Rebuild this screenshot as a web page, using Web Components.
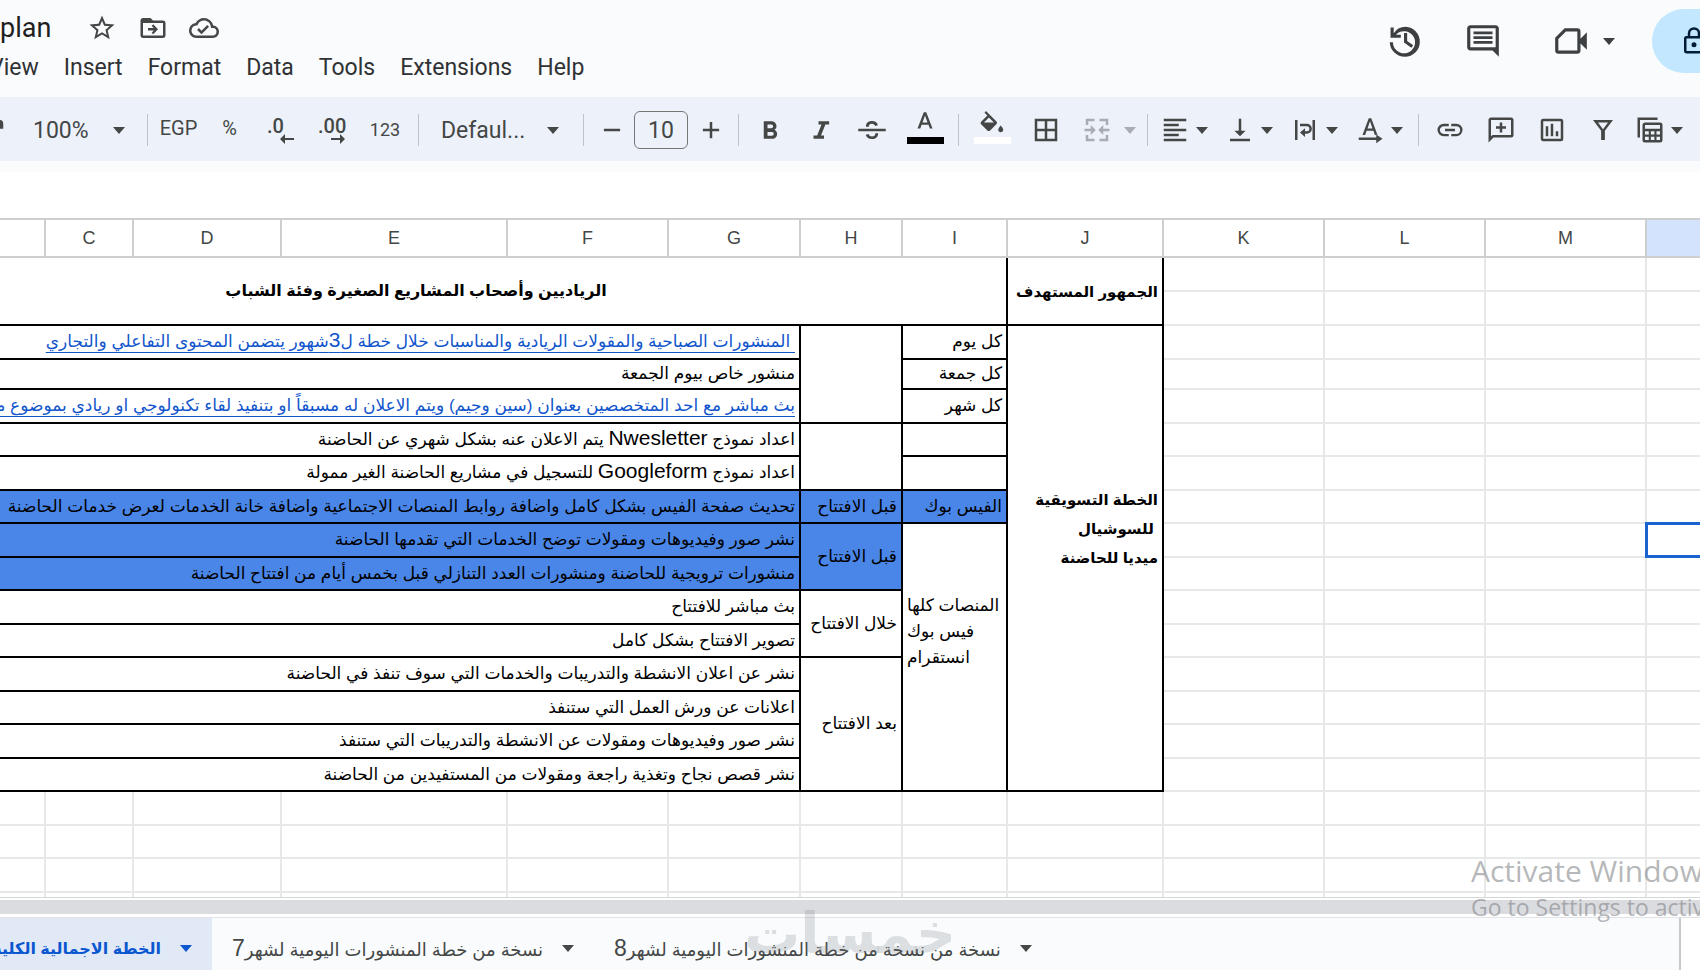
<!DOCTYPE html>
<html lang="en">
<head>
<meta charset="utf-8">
<title>plan</title>
<style>
  body {
    margin: 0;
    height: 100vh;
    overflow: hidden;
    font-family: Roboto, "DejaVu Sans", sans-serif;
    color: #444746;
    background: #fff;
  }
  sheet-app {
    height: 100%;
  }
</style>
</head>
<body>
<sheet-app>
  <doc-header slot="header" name="plan"></doc-header>
  <tool-bar slot="toolbar"></tool-bar>
  <sheet-grid></sheet-grid>
  <sheet-tabs slot="tabs"></sheet-tabs>
  <site-watermark slot="overlay">خمسات</site-watermark>
  <activation-notice slot="overlay">
    <span slot="title">Activate Windows</span>
    <span>Go to Settings to activate Windows.</span>
  </activation-notice>
</sheet-app>

<script>
const ICONS = {
  star: '<path d="M22 9.24l-7.19-.62L12 2 9.19 8.63 2 9.24l5.46 4.73L5.82 21 12 17.27 18.18 21l-1.63-7.03L22 9.24zM12 15.4l-3.76 2.27 1-4.28-3.32-2.88 4.38-.38L12 6.1l1.71 4.04 4.38.38-3.32 2.88 1 4.28L12 15.4z"/>',
  move: '<path d="M20 6h-8l-2-2H4c-1.1 0-2 .9-2 2v12c0 1.1.9 2 2 2h16c1.1 0 2-.9 2-2V8c0-1.1-.9-2-2-2zm0 12H4V8h16v10zm-7.8-1l3.8-4-3.8-4-1.3 1.3L12.600 12H8v2h4.600l-1.7 1.700z"/>',
  cloud: '<path d="M19.35 10.04A7.49 7.49 0 0 0 12 4C9.110 4 6.600 5.640 5.350 8.040A5.994 5.994 0 0 0 0 14c0 3.310 2.690 6 6 6h13c2.760 0 5-2.240 5-5 0-2.640-2.050-4.780-4.650-4.960zM19 18H6c-2.210 0-4-1.790-4-4 0-2.050 1.530-3.760 3.560-3.970l1.070-.11.5-.95A5.469 5.469 0 0 1 12 6c2.620 0 4.880 1.860 5.390 4.430l.3 1.500 1.530.11A2.980 2.980 0 0 1 22 15c0 1.650-1.350 3-3 3zm-9-3.820l-2.090-2.090L6.500 13.500 10 17l6.010-6.010-1.410-1.410z"/>',
  history: '<path d="M13 3a9 9 0 0 0-7.500 4.050V3.500h-2V10H10V8H6.900A7 7 0 1 1 5 12.800H3A9.500 9.500 0 1 0 13 3zm-1 4v6l4.700 3.300 1.100-1.600L14 12V7z"/>',
  comment: '<path d="M22 4c0-1.100-.9-2-2-2H4c-1.100 0-2 .9-2 2v12c0 1.100.9 2 2 2h14l4 4V4zM20 16H4V4h16v12zM6 12h12v1.800H6zm0-3h12v1.800H6zm0-3h12v1.800H6z"/>',
  meet: '<path d="M8 4h8a2 2 0 0 1 2 2v4.500L22 6.500v11l-4-4V18a2 2 0 0 1-2 2H4a2 2 0 0 1-2-2v-8zM8.800 6L4 10.800V18h12V6z" fill-rule="evenodd"/>',
  lock: '<path d="M18 8h-1V6A5 5 0 0 0 7 6v2H6a2 2 0 0 0-2 2v10c0 1.100.9 2 2 2h12a2 2 0 0 0 2-2V10a2 2 0 0 0-2-2zM9 6a3 3 0 0 1 6 0v2H9zm9 14H6V10h12zm-6-3a2 2 0 1 0 0-4 2 2 0 0 0 0 4z"/>',
  paint: '<path d="M4 4h14a3 3 0 0 1 3 3v4h-9v10H9V9h9V7H4z"/>',
  minus: '<path d="M5.500 11h13v2h-13z"/>',
  plus: '<path d="M18.500 13H13v5.500h-2V13H5.500v-2H11V5.500h2V11h5.500z"/>',
  bold: '<path d="M15.600 11.800c1-.7 1.600-1.800 1.600-2.800 0-2.300-1.700-4-4-4H7v14h7c2.100 0 3.700-1.700 3.700-3.800 0-1.500-.8-2.800-2.100-3.400zM10 7.500h3a1.500 1.500 0 0 1 0 3h-3zm3.500 9H10v-3h3.500a1.500 1.500 0 0 1 0 3z"/>',
  italic: '<path d="M10 5v2.600h2.400l-3.500 8.800H6V19h8.400v-2.600H12l3.500-8.800H18.500V5z"/>',
  strike: '<path d="M1 11h22v2H1zM7.200 9.300C7 6.500 9 4.800 12 4.800c2.500 0 4.200 1.200 4.700 3.300l-2.200.7c-.3-1.200-1.200-1.900-2.500-1.900-1.700 0-2.600.8-2.600 2.400zM16.900 14.500c0 3-1.900 4.700-4.900 4.700-2.600 0-4.500-1.300-5-3.500l2.200-.6c.4 1.300 1.400 2 2.800 2 1.700 0 2.700-.8 2.700-2.600z"/>',
  textColor: '<path d="M11 1L6 14h2.200l1.100-3.100h5.500l1.100 3.100H18L13 1zM10 9.100l2-5.600 2 5.600z"/>',
  fill: '<path d="M15.600 8.400L7.200 0 6 1.300l2.300 2.300-5 5c-.5.500-.5 1.400 0 2l5 5c.3.300.7.400 1.100.4s.8-.1 1.100-.4l5.100-5.200c.5-.5.5-1.400 0-2zM5.500 9.200L9.500 5.200l4 4zM19 11.500s-2 2.100-2 3.500c0 1.100.9 2 2 2s2-.9 2-2c0-1.400-2-3.500-2-3.500z"/>',
  borders: '<path d="M3 3v18h18V3zm8 16H5v-6h6zm0-8H5V5h6zm8 8h-6v-6h6zm0-8h-6V5h6z"/>',
  merge: '<path d="M3 3h7v2H5v3H3zm11 0h7v5h-2V5h-5zM3 16h2v3h5v2H3zm16 0h2v5h-7v-2h5zM2 11h5V8l4 4-4 4v-3H2zm20 0h-5V8l-4 4 4 4v-3h5z"/>',
  align: '<path d="M3 3h18v2H3zm0 4h12v2H3zm0 4h18v2H3zm0 4h12v2H3zm0 4h18v2H3z"/>',
  valign: '<path d="M16.500 12.500h-3.500V3h-2v9.500H7.500L12 17zM4 19v2h16v-2z"/>',
  wrap: '<path d="M4 4h2v16H4zm14 0h2v16h-2zM8 7h5.500a3.800 3.800 0 0 1 0 8H12v2.500L8 14l4-3.500V13h1.500a1.900 1.900 0 0 0 0-4H8z"/>',
  rotate: '<path d="M11 2.500L6 16h2.100l1.200-3.400h5.400l1.200 3.400H18L13 2.500zM10 10.700l2-5.700 2 5.700zM3 18h14v-2.500l5 3.500-5 3.500V20H3z"/>',
  link: '<path d="M3.900 12c0-1.710 1.390-3.100 3.100-3.100h4V7H7a5 5 0 0 0 0 10h4v-1.900H7c-1.710 0-3.100-1.390-3.100-3.100zM8 13h8v-2H8zm9-6h-4v1.900h4a3.100 3.100 0 0 1 0 6.200h-4V17h4a5 5 0 0 0 0-10z"/>',
  addComment: '<path d="M4 2h16a2 2 0 0 1 2 2v12a2 2 0 0 1-2 2H6l-4 4V4c0-1.100.9-2 2-2zm0 2v13l1.200-1H20V4zm7 2h2v3h3v2h-3v3h-2v-3H8V9h3z" fill-rule="evenodd"/>',
  chart: '<path d="M19 3H5a2 2 0 0 0-2 2v14c0 1.100.9 2 2 2h14a2 2 0 0 0 2-2V5a2 2 0 0 0-2-2zm0 16H5V5h14zM7 9h2v8H7zm4-2h2v10h-2zm4 6h2v4h-2z"/>',
  filter: '<path d="M4 4h16l-6.500 8.500V20h-3v-7.500zM8 6l4 5.300L16 6z" fill-rule="evenodd"/>',
  views: '<path d="M2 2h16v2H4v14H2zM8 6h12a2 2 0 0 1 2 2v12a2 2 0 0 1-2 2H8a2 2 0 0 1-2-2V8c0-1.100.9-2 2-2zm0 2v3h12V8zm0 5v2.500h3V13zm4.700 0v2.500h2.800V13zm4.500 0v2.500H20V13zM8 17.300V20h3v-2.700zm4.700 0V20h2.800v-2.700zm4.500 0V20H20v-2.700z" fill-rule="evenodd"/>',
};

class SheetIcon extends HTMLElement {
  constructor() {
    super();
    this.attachShadow({ mode: "open" });
  }

  connectedCallback() {
    this.shadowRoot.innerHTML = `
      <style>
        :host { display: block; flex: none; width: var(--icon, 30px); height: var(--icon, 30px); }
        svg { display: block; width: 100%; height: 100%; fill: currentColor; }
      </style>
      <svg viewBox="0 0 24 24" aria-hidden="true">${ICONS[this.getAttribute("name")]}</svg>
    `;
  }
}
customElements.define("sheet-icon", SheetIcon);

class DropCaret extends HTMLElement {
  constructor() {
    super();
    this.attachShadow({ mode: "open" }).innerHTML = `
      <style>
        :host { display: block; flex: none; width: 12px; height: 7px; }
        svg { display: block; fill: currentColor; }
      </style>
      <svg width="12" height="7" viewBox="0 0 12 7" aria-hidden="true"><path d="M0 0h12L6 7z"/></svg>
    `;
  }
}
customElements.define("drop-caret", DropCaret);

class SheetApp extends HTMLElement {
  constructor() {
    super();
    this.attachShadow({ mode: "open" }).innerHTML = `
      <style>
        :host { display: flex; flex-direction: column; position: relative; overflow: hidden; }
        main { flex: 1; min-height: 0; display: flex; flex-direction: column; }
      </style>
      <slot name="header"></slot>
      <slot name="toolbar"></slot>
      <main><slot></slot></main>
      <slot name="tabs"></slot>
      <slot name="overlay"></slot>
    `;
  }
}
customElements.define("sheet-app", SheetApp);

class DocHeader extends HTMLElement {
  constructor() {
    super();
    this.attachShadow({ mode: "open" });
  }

  connectedCallback() {
    const menus = ["View", "Insert", "Format", "Data", "Tools", "Extensions", "Help"];
    this.shadowRoot.innerHTML = `
      <style>
        :host {
          display: flex;
          justify-content: space-between;
          height: 97px;
          background: #f9fbfd;
          color: #1f1f1f;
        }
        button {
          display: flex;
          align-items: center;
          border: 0;
          padding: 0;
          background: none;
          font: inherit;
          color: inherit;
        }
        .title {
          display: flex;
          align-items: center;
          gap: 21px;
          height: 56px;
          --icon: 30px;
          color: #444746;
        }
        h1 {
          margin: 0 15px 0 0;
          font-size: 27px;
          line-height: 32px;
          font-weight: 400;
          color: #1f1f1f;
        }
        nav {
          display: flex;
          gap: 25px;
          margin-left: -11px;
          font-size: 23px;
          line-height: 24px;
          color: #303234;
        }
        .actions {
          display: flex;
          align-items: flex-start;
          flex: none;
          color: #3c4043;
          --icon: 38px;
        }
        .actions button { height: 64px; margin-top: 9px; }
        .history { width: 79px; }
        .comment { width: 88px; }
        .meet { gap: 13px; width: 100px; }
        .share {
          --icon: 30px;
          box-sizing: border-box;
          width: 48px;
          padding-left: 27px;
          border-radius: 32px 0 0 32px;
          background: #c2e7ff;
          color: #001d35;
          overflow: hidden;
        }
      </style>
      <div>
        <div class="title">
          <h1>${this.getAttribute("name")}</h1>
          <button aria-label="Star"><sheet-icon name="star"></sheet-icon></button>
          <button aria-label="Move"><sheet-icon name="move"></sheet-icon></button>
          <button aria-label="Saved to Drive"><sheet-icon name="cloud"></sheet-icon></button>
        </div>
        <nav>${menus.map((m) => `<button>${m}</button>`).join("")}</nav>
      </div>
      <div class="actions">
        <button class="history" aria-label="Version history"><sheet-icon name="history"></sheet-icon></button>
        <button class="comment" aria-label="Comments"><sheet-icon name="comment"></sheet-icon></button>
        <button class="meet" aria-label="Meet"><sheet-icon name="meet"></sheet-icon><drop-caret></drop-caret></button>
        <button class="share" aria-label="Share"><sheet-icon name="lock"></sheet-icon></button>
      </div>
    `;
  }
}
customElements.define("doc-header", DocHeader);

class ToolBar extends HTMLElement {
  constructor() {
    super();
    this.attachShadow({ mode: "open" });
  }

  button(name, label, cls = "") {
    return `<button class="${cls}" aria-label="${label}"><sheet-icon name="${name}"></sheet-icon></button>`;
  }

  menu(name, label, cls = "") {
    return `<button class="menu ${cls}" aria-label="${label}"><sheet-icon name="${name}"></sheet-icon><drop-caret></drop-caret></button>`;
  }

  connectedCallback() {
    this.shadowRoot.innerHTML = `
      <style>
        :host {
          display: flex;
          align-items: center;
          height: 62px;
          padding-top: 2px;
          overflow: hidden;
          background: #edf2fa;
          border-bottom: 11px solid #f9fbfd;
          font-size: 23px;
        }
        :host > * { flex: none; }
        button {
          display: flex;
          align-items: center;
          justify-content: center;
          width: 51px;
          height: 48px;
          padding: 0;
          border: 0;
          background: none;
          font: inherit;
          color: inherit;
        }
        hr { width: 1px; height: 32px; margin: 0 5px; border: 0; background: #c0c4c9; }
        .paint { width: 16px; padding-right: 9px; justify-content: flex-end; overflow: hidden; }
        .wide { width: 56px; }
        .step { width: 45px; }
        .format { padding-bottom: 4px; font-size: 20px; }
        .small { padding-bottom: 2px; font-size: 18px; }
        .menu { width: 65px; justify-content: flex-start; gap: 6px; padding-left: 7px; }
        .merge { width: 71px; gap: 12px; padding-left: 11px; color: #a9adb3; }
        .color { flex-direction: column; justify-content: flex-start; padding-top: 5px; }
        .color::after { content: ""; width: 37px; height: 7px; margin-top: -4px; background: var(--swatch); }
        .decimal {
          flex-direction: column;
          align-items: flex-start;
          padding-left: 12px;
          font-size: 20px;
          font-weight: 500;
          line-height: 20px;
        }
        .decimal svg { margin: -2px 0 0 13px; }
        label { display: flex; align-items: center; box-sizing: border-box; }
        .zoom { width: 126px; padding-left: 17px; }
        .zoom select { width: 80px; }
        .font { width: 154px; padding-left: 17px; }
        .font select { width: 106px; }
        select {
          appearance: none;
          border: 0;
          padding: 0;
          background: none;
          font: inherit;
          color: inherit;
        }
        input {
          box-sizing: border-box;
          width: 54px;
          height: 38px;
          padding: 0;
          border: 1px solid #747775;
          border-radius: 6px;
          background: none;
          font: inherit;
          color: inherit;
          text-align: center;
        }
      </style>
      ${this.button("paint", "Paint format", "paint")}
      <label class="zoom"><select aria-label="Zoom"><option>100%</option></select><drop-caret></drop-caret></label>
      <hr>
      <button class="format">EGP</button>
      <button class="format">%</button>
      <button class="decimal">.0<svg width="14" height="10" viewBox="0 0 14 10"><path d="M14 4H5V0L0 5l5 5V6h9z" fill="currentColor"/></svg></button>
      <button class="decimal">.00<svg width="14" height="10" viewBox="0 0 14 10"><path d="M0 4h9V0l5 5-5 5V6H0z" fill="currentColor"/></svg></button>
      <button class="small wide">123</button>
      <hr>
      <label class="font"><select aria-label="Font"><option>Defaul...</option></select><drop-caret></drop-caret></label>
      <hr>
      ${this.button("minus", "Decrease font size", "step")}
      <input aria-label="Font size" value="10">
      ${this.button("plus", "Increase font size", "step")}
      <hr>
      ${this.button("bold", "Bold")}
      ${this.button("italic", "Italic")}
      ${this.button("strike", "Strikethrough")}
      <button class="wide color" style="--swatch: #000" aria-label="Text color"><sheet-icon name="textColor"></sheet-icon></button>
      <hr>
      <button class="wide color" style="--swatch: #fff" aria-label="Fill color"><sheet-icon name="fill"></sheet-icon></button>
      ${this.button("borders", "Borders")}
      ${this.menu("merge", "Merge cells", "merge")}
      <hr>
      ${this.menu("align", "Horizontal align")}
      ${this.menu("valign", "Vertical align")}
      ${this.menu("wrap", "Text wrapping")}
      ${this.menu("rotate", "Text rotation")}
      <hr>
      ${this.button("link", "Insert link")}
      ${this.button("addComment", "Insert comment")}
      ${this.button("chart", "Insert chart")}
      ${this.button("filter", "Create a filter")}
      ${this.menu("views", "Table views")}
    `;
  }
}
customElements.define("tool-bar", ToolBar);

class SheetGrid extends HTMLElement {
  constructor() {
    super();
    this.attachShadow({ mode: "open" });
  }

  // each entry is one sheet row: the filled cells from B to J, left to right
  rows() {
    return [
      `<td class="b title" colspan="8" rowspan="2">الرياديين وأصحاب المشاريع الصغيرة وفئة الشباب</td>
       <td class="b head" rowspan="2">الجمهور المستهدف</td>`,
      ``,
      `<td class="b" colspan="6"><a href="#">&nbsp;المنشورات الصباحية والمقولات الريادية والمناسبات خلال خطة ل<bdi>3</bdi>شهور يتضمن المحتوى التفاعلي والتجاري</a></td>
       <td class="b" rowspan="3"></td><td class="b">كل يوم</td>
       <td class="b head plan" rowspan="14">الخطة التسويقية<br>&nbsp;للسوشيال<br>ميديا للحاضنة</td>`,
      `<td class="b" colspan="6">منشور خاص بيوم الجمعة</td><td class="b">كل جمعة</td>`,
      `<td class="b" colspan="6"><a href="#">بث مباشر مع احد المتخصصين بعنوان (سين وجيم) ويتم الاعلان له مسبقاً او بتنفيذ لقاء تكنولوجي او ريادي بموضوع معين</a></td>
       <td class="b">كل شهر</td>`,
      `<td class="b" colspan="6">اعداد نموذج <bdi>Nwesletter</bdi> يتم الاعلان عنه بشكل شهري عن الحاضنة</td>
       <td class="b" rowspan="2"></td><td class="b"></td>`,
      `<td class="b" colspan="6">اعداد نموذج <bdi>Googleform</bdi> للتسجيل في مشاريع الحاضنة الغير ممولة</td><td class="b"></td>`,
      `<td class="b blue" colspan="6">تحديث صفحة الفيس بشكل كامل واضافة روابط المنصات الاجتماعية واضافة خانة الخدمات لعرض خدمات الحاضنة</td>
       <td class="b blue">قبل الافتتاح</td><td class="b blue">الفيس بوك</td>`,
      `<td class="b blue" colspan="6">نشر صور وفيديوهات ومقولات توضح الخدمات التي تقدمها الحاضنة</td>
       <td class="b blue" rowspan="2">قبل الافتتاح</td>
       <td class="b platforms" rowspan="8">المنصات كلها<br>فيس بوك<br>انستقرام</td>`,
      `<td class="b blue" colspan="6">منشورات ترويجية للحاضنة ومنشورات العدد التنازلي قبل بخمس أيام من افتتاح الحاضنة</td>`,
      `<td class="b" colspan="6">بث مباشر للافتتاح</td><td class="b" rowspan="2">خلال الافتتاح</td>`,
      `<td class="b" colspan="6">تصوير الافتتاح بشكل كامل</td>`,
      `<td class="b" colspan="6">نشر عن اعلان الانشطة والتدريبات والخدمات التي سوف تنفذ في الحاضنة</td><td class="b" rowspan="4">بعد الافتتاح</td>`,
      `<td class="b" colspan="6">اعلانات عن ورش العمل التي ستنفذ</td>`,
      `<td class="b" colspan="6">نشر صور وفيديوهات ومقولات عن الانشطة والتدريبات التي ستنفذ</td>`,
      `<td class="b" colspan="6">نشر قصص نجاح وتغذية راجعة ومقولات من المستفيدين من الحاضنة</td>`,
    ];
  }

  connectedCallback() {
    const widths = [220, 88, 148, 226, 161, 132, 102, 105, 156, 161, 161, 161];
    const letters = ["", "C", "D", "E", "F", "G", "H", "I", "J", "K", "L", "M"];
    const blank = "<td></td>";
    const body = this.rows().map((cells, i) =>
      `<tr>${cells}${blank.repeat(3)}${i === 8 ? '<td class="active"></td>' : blank}</tr>`);
    const empty = `<tr>${blank.repeat(13)}</tr>`.repeat(4);

    this.shadowRoot.innerHTML = `
      <style>
        :host {
          display: flex;
          flex-direction: column;
          flex: 1;
          min-height: 0;
          background: #fff;
        }
        .view {
          flex: 1;
          min-height: 0;
          margin-top: 46px;
          overflow: hidden;
          border-bottom: 1px solid #d5d6d8;
        }
        /* scrolled sideways past column A */
        table {
          width: calc(100% + 200px);
          margin-left: -176px;
          table-layout: fixed;
          border-collapse: collapse;
          font-family: "Liberation Sans", "DejaVu Sans", sans-serif;
          font-size: 17px;
          line-height: 26px;
          color: #000;
        }
        th {
          height: 36px;
          padding: 0;
          border: 2px solid #cdcfce;
          font-size: 18px;
          font-weight: 400;
          color: #444746;
        }
        th.on { background: #d3e3fd; }
        tr { height: 33px; }
        tbody tr:nth-child(odd), tbody tr:nth-child(2) { height: 34px; }
        tbody tr:nth-child(4) { height: 30px; }
        td {
          padding: 0 4px;
          border: 2px solid #e7e8e8;
          direction: rtl;
          text-align: right;
          white-space: nowrap;
          overflow: hidden;
        }
        .b { border-color: #000; }
        .blue { background: #4a86e8; }
        .title { font-size: 16px; font-weight: 700; text-align: center; }
        .head { font-size: 15px; font-weight: 700; line-height: 29px; }
        .plan { padding-bottom: 60px; }
        .platforms { padding-bottom: 50px; text-align: left; }
        .active { outline: 3px solid #1a62cf; outline-offset: -2px; }
        a { color: #1155cc; text-underline-offset: 5px; }
        bdi { font-size: 21px; line-height: 20px; }
        .bar {
          height: 14px;
          margin: 2px 0 3px;
          background: #dadce0;
        }
      </style>
      <div class="view">
        <table>
          <colgroup>${widths.map((w) => `<col style="width:${w}px">`).join("")}<col></colgroup>
          <thead><tr>${letters.map((l) => `<th>${l}</th>`).join("")}<th class="on"></th></tr></thead>
          <tbody>${body.join("")}${empty}</tbody>
        </table>
      </div>
      <div class="bar"></div>
    `;
  }
}
customElements.define("sheet-grid", SheetGrid);

class SheetTabs extends HTMLElement {
  constructor() {
    super();
    this.attachShadow({ mode: "open" });
  }

  connectedCallback() {
    this.shadowRoot.innerHTML = `
      <style>
        :host {
          display: flex;
          height: 52px;
          border-top: 1px solid #e1e3e6;
          background: #f9fbfd;
          overflow: hidden;
        }
        button {
          display: flex;
          flex: none;
          align-items: center;
          justify-content: flex-end;
          gap: 19px;
          padding: 8px 20px 0;
          border: 0;
          background: none;
          font-family: "Liberation Sans", "DejaVu Sans", sans-serif;
          font-size: 18px;
          color: #444746;
          white-space: nowrap;
        }
        .current {
          width: 212px;
          background: #e1e9f7;
          color: #0b57d0;
          font-size: 16px;
          font-weight: 700;
        }
        bdi { font-size: 23px; }
        .side {
          width: 19px;
          margin-left: auto;
          border-left: 2px solid #c7cacd;
          background: #fff;
        }
      </style>
      <button class="current"><span dir="rtl">الخطة الاجمالية الكلية</span><drop-caret></drop-caret></button>
      <button><span dir="rtl">نسخة من خطة المنشورات اليومية لشهر<bdi>7</bdi></span><drop-caret></drop-caret></button>
      <button><span dir="rtl">نسخة من نسخة من خطة المنشورات اليومية لشهر<bdi>8</bdi></span><drop-caret></drop-caret></button>
      <div class="side"></div>
    `;
  }
}
customElements.define("sheet-tabs", SheetTabs);

class SiteWatermark extends HTMLElement {
  constructor() {
    super();
    this.attachShadow({ mode: "open" }).innerHTML = `
      <style>
        :host {
          position: absolute;
          left: 50%;
          bottom: 6px;
          transform: translateX(-50%);
          font: 700 56px/60px "DejaVu Sans", sans-serif;
          color: rgba(120, 122, 126, .22);
          pointer-events: none;
        }
      </style>
      <slot></slot>
    `;
  }
}
customElements.define("site-watermark", SiteWatermark);

class ActivationNotice extends HTMLElement {
  constructor() {
    super();
    this.attachShadow({ mode: "open" }).innerHTML = `
      <style>
        :host {
          position: absolute;
          left: calc(100% - 229px);
          bottom: 47px;
          font: 23px/32px "Open Sans", sans-serif;
          color: rgba(120, 122, 126, .55);
          white-space: nowrap;
          pointer-events: none;
        }
        div { font-size: 30px; line-height: 40px; }
      </style>
      <div><slot name="title"></slot></div>
      <slot></slot>
    `;
  }
}
customElements.define("activation-notice", ActivationNotice);
</script>
</body>
</html>
